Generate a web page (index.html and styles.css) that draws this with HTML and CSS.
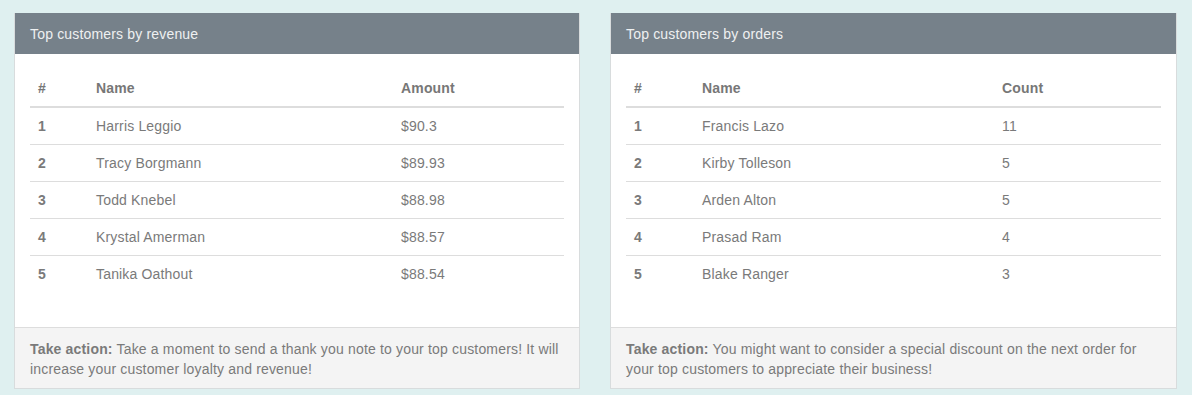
FILE: index.html
```html
<!DOCTYPE html>
<html>
<head>
<meta charset="utf-8">
<link rel="stylesheet" href="styles.css">
</head>
<body>
<div class="row">
  <div class="panel">
    <div class="panel-heading">Top customers by revenue</div>
    <div class="panel-body">
      <table class="table rev">
        <thead><tr><th class="c1">#</th><th class="c2">Name</th><th class="c3">Amount</th></tr></thead>
        <tbody>
          <tr><td class="num">1</td><td>Harris Leggio</td><td>$90.3</td></tr>
          <tr><td class="num">2</td><td>Tracy Borgmann</td><td>$89.93</td></tr>
          <tr><td class="num">3</td><td>Todd Knebel</td><td>$88.98</td></tr>
          <tr><td class="num">4</td><td>Krystal Amerman</td><td>$88.57</td></tr>
          <tr><td class="num">5</td><td>Tanika Oathout</td><td>$88.54</td></tr>
        </tbody>
      </table>
    </div>
    <div class="panel-footer"><strong>Take action:</strong> Take a moment to send a thank you note to your top customers! It will increase your customer loyalty and revenue!</div>
  </div>
  <div class="panel">
    <div class="panel-heading">Top customers by orders</div>
    <div class="panel-body">
      <table class="table ord">
        <thead><tr><th class="c1">#</th><th class="c2">Name</th><th class="c3">Count</th></tr></thead>
        <tbody>
          <tr><td class="num">1</td><td>Francis Lazo</td><td>11</td></tr>
          <tr><td class="num">2</td><td>Kirby Tolleson</td><td>5</td></tr>
          <tr><td class="num">3</td><td>Arden Alton</td><td>5</td></tr>
          <tr><td class="num">4</td><td>Prasad Ram</td><td>4</td></tr>
          <tr><td class="num">5</td><td>Blake Ranger</td><td>3</td></tr>
        </tbody>
      </table>
    </div>
    <div class="panel-footer"><strong>Take action:</strong> You might want to consider a special discount on the next order for your top customers to appreciate their business!</div>
  </div>
</div>
</body>
</html>
```
FILE: styles.css
```css
html, body {
  margin: 0;
  padding: 0;
  background: #dff0f0;
  font-family: "Liberation Sans", Arial, sans-serif;
  font-size: 14px;
  line-height: 20px;
  letter-spacing: 0.17px;
  color: #7a7a7a;
}
.row {
  display: grid;
  grid-template-columns: 566px 567px;
  column-gap: 30px;
  padding: 13px 15px 0 14px;
  align-items: start;
}
.panel {
  background: #fff;
  border: 1px solid #d8dcdd;
  border-top: none;
  box-sizing: border-box;
}
.panel-heading {
  background: #76818a;
  color: #eef0f1;
  height: 41px;
  box-sizing: border-box;
  padding: 11px 15px 10px;
  font-size: 14px;
}
.panel-body {
  padding: 16px 15px 35px;
}
.table {
  width: 100%;
  border-collapse: collapse;
  border-spacing: 0;
  table-layout: fixed;
}
.table th {
  text-align: left;
  font-weight: bold;
  color: #777;
  padding: 8px 8px;
  border-bottom: 2px solid #ddd;
  box-sizing: border-box;
}
.table td {
  padding: 8px 8px;
  border-top: 1px solid #ddd;
}
.table tbody tr:first-child td {
  border-top: none;
}
.table td.num {
  font-weight: bold;
}
.rev .c1 { width: 58px; }
.rev .c2 { width: 305px; }
.ord .c1 { width: 68px; }
.ord .c2 { width: 300px; }
.panel-footer {
  background: #f4f4f4;
  border-top: 1px solid #ddd;
  padding: 11px 15px 9px;
}
.panel-footer strong {
  font-weight: bold;
}
```
